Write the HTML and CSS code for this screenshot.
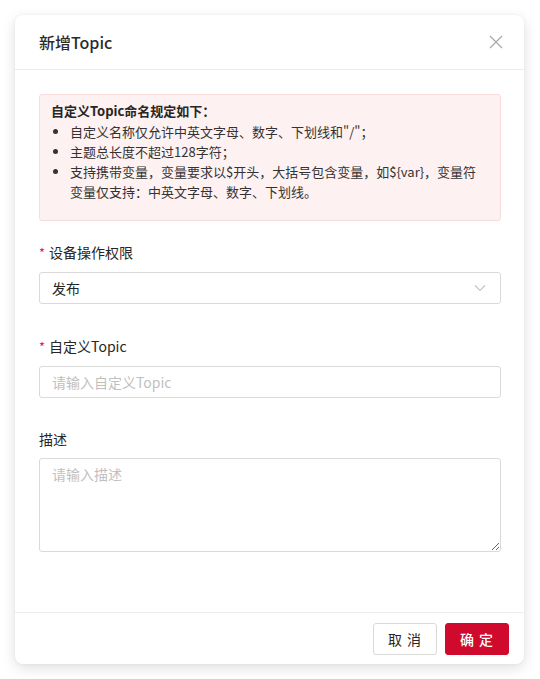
FILE: index.html
```html
<!DOCTYPE html>
<html lang="zh-CN">
<head>
<meta charset="utf-8">
<title>新增Topic</title>
<link rel="stylesheet" href="styles.css">
</head>
<body>
<div class="page">
  <div class="modal">
    <div class="modal-header">
      <div class="modal-title">新增Topic</div>
      <svg class="close" width="14" height="14" viewBox="0 0 14 14"><path d="M1 1L13 13M13 1L1 13" stroke="#a6a6a6" stroke-width="1.1" fill="none"/></svg>
    </div>
    <div class="modal-body">
      <div class="alert">
        <div class="alert-title">自定义Topic命名规定如下：</div>
        <ul class="alert-list">
          <li>自定义名称仅允许中英文字母、数字、下划线和"/"；</li>
          <li>主题总长度不超过128字符；</li>
          <li>支持携带变量，变量要求以$开头，大括号包含变量，如${var}，变量符变量仅支持：中英文字母、数字、下划线。</li>
        </ul>
      </div>
      <div class="form-item first">
        <div class="label"><span class="req">*</span>设备操作权限</div>
        <div class="select">
          <span>发布</span>
          <svg width="12" height="8" viewBox="0 0 12 8"><path d="M1 1.5L6 6.5L11 1.5" stroke="#c4c4c4" stroke-width="1.1" fill="none"/></svg>
        </div>
      </div>
      <div class="form-item">
        <div class="label"><span class="req">*</span>自定义Topic</div>
        <input class="input" type="text" placeholder="请输入自定义Topic">
      </div>
      <div class="form-item">
        <div class="label">描述</div>
        <textarea class="textarea" placeholder="请输入描述"></textarea>
      </div>
    </div>
    <div class="modal-footer">
      <button class="btn">取 消</button>
      <button class="btn primary">确 定</button>
    </div>
  </div>
</div>
</body>
</html>
```
FILE: styles.css
```css
* { box-sizing: border-box; }
html, body { margin: 0; padding: 0; background: #fff; }
body {
  font-family: "Noto Sans CJK SC", "Noto Sans", sans-serif;
  color: #262626;
  font-size: 14px;
}
.page { padding: 15px 16px 15px 15px; }
.modal {
  width: 509px;
  height: 649px;
  background: #fff;
  border-radius: 8px;
  box-shadow: 0 4px 14px rgba(0,0,0,0.13), 0 0 3px rgba(0,0,0,0.05);
  display: flex;
  flex-direction: column;
}
.modal-header {
  height: 55px;
  border-bottom: 1px solid #ebebeb;
  display: flex;
  align-items: center;
  justify-content: space-between;
  padding: 0 21px 0 24px;
}
.modal-title { font-size: 16px; font-weight: 500; color: #2b2b2b; line-height: 22px; }
.close { display: block; }
.modal-body { flex: 1; padding: 24px 23px 0 24px; }
.alert {
  background: #fdf1f1;
  border: 1px solid #f7dcdc;
  border-radius: 3px;
  padding: 5px 12px 18px 11px;
  font-size: 13px;
  line-height: 20px;
  color: #333;
}
.alert-title { font-weight: 700; color: #262626; line-height: 22px; }
.alert-list { margin: 0; padding-left: 19px; }
.alert-list li { line-height: 20px; }
.form-item { margin-top: 31px; }
.form-item.first { margin-top: 20px; }
.form-item:last-child { margin-top: 30px; }
.label { font-size: 14px; line-height: 22px; color: #262626; margin-bottom: 8px; }
.req { color: #e0283c; margin-right: 4px; font-size: 13px; }
.select, .input, .textarea {
  width: 100%;
  border: 1px solid #d9d9d9;
  border-radius: 3px;
  background: #fff;
  font-family: inherit;
  font-size: 14px;
}
.select {
  height: 32px;
  display: flex;
  align-items: center;
  justify-content: space-between;
  padding: 0 14px 0 12px;
  color: #262626;
}
.input {
  display: block;
  height: 32px;
  padding: 0 12px;
  outline: none;
}
.textarea {
  display: block;
  height: 94px;
  padding: 4px 12px;
  line-height: 22px;
  resize: vertical;
  outline: none;
}
.input::placeholder, .textarea::placeholder { color: #bfbfbf; }
.modal-footer {
  height: 52px;
  border-top: 1px solid #ebebeb;
  display: flex;
  align-items: center;
  justify-content: flex-end;
  gap: 8px;
  padding: 0 15px;
}
.btn {
  width: 64px;
  height: 32px;
  border: 1px solid #d9d9d9;
  border-radius: 3px;
  background: #fff;
  font-family: inherit;
  font-size: 14px;
  color: #262626;
  letter-spacing: 1px;
}
.btn.primary {
  background: #cf0a2c;
  border-color: #cf0a2c;
  color: #fff;
  font-weight: 500;
}
```
